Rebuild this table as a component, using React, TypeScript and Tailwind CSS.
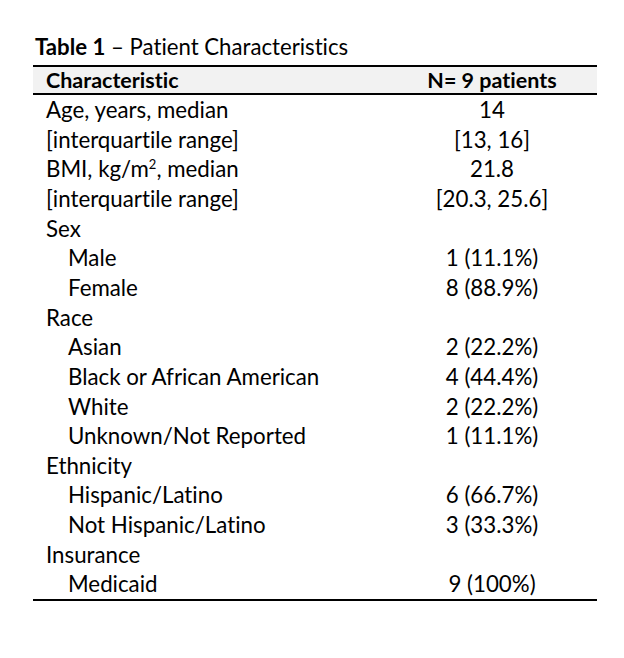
import React from 'react'

type Row = { label: React.ReactNode; value?: string; indent?: boolean }

const rows: Row[] = [
  { label: 'Age, years, median', value: '14' },
  { label: '[interquartile range]', value: '[13, 16]' },
  {
    label: (
      <>
        BMI, kg/m<sup className="text-[13px] relative -top-[8px]">2</sup>, median
      </>
    ),
    value: '21.8',
  },
  { label: '[interquartile range]', value: '[20.3, 25.6]' },
  { label: 'Sex' },
  { label: 'Male', value: '1 (11.1%)', indent: true },
  { label: 'Female', value: '8 (88.9%)', indent: true },
  { label: 'Race' },
  { label: 'Asian', value: '2 (22.2%)', indent: true },
  { label: 'Black or African American', value: '4 (44.4%)', indent: true },
  { label: 'White', value: '2 (22.2%)', indent: true },
  { label: 'Unknown/Not Reported', value: '1 (11.1%)', indent: true },
  { label: 'Ethnicity' },
  { label: 'Hispanic/Latino', value: '6 (66.7%)', indent: true },
  { label: 'Not Hispanic/Latino', value: '3 (33.3%)', indent: true },
  { label: 'Insurance' },
  { label: 'Medicaid', value: '9 (100%)', indent: true },
]

export default function App() {
  return (
    <div
      className="w-[624px] h-[658px] bg-white text-black pt-[34px] pl-[33px] [font-variant-ligatures:none]"
      style={{ fontFamily: 'Lato, "Open Sans", sans-serif' }}
    >
      <div className="w-[564px]">
        {/* Title */}
        <div className="text-[22.2px] leading-[26px] pl-[2px] h-[31px]">
          <span className="font-bold">Table 1</span> – Patient Characteristics
        </div>

        {/* Header */}
        <div className="flex items-center h-[30px] border-t-2 border-b-2 border-black bg-[#f2f2f2] text-[21.5px] font-bold">
          <div className="flex-1 pl-[13px]">Characteristic</div>
          <div className="w-[210px] text-center">N= 9 patients</div>
        </div>

        {/* Rows */}
        <div className="border-b-2 border-black">
          {rows.map((r, i) => (
            <div key={i} className="flex items-center h-[29.65px] text-[22.3px]">
              <div className={r.indent ? 'flex-1 pl-[35px]' : 'flex-1 pl-[13px]'}>{r.label}</div>
              <div className="w-[210px] text-center">{r.value}</div>
            </div>
          ))}
        </div>
      </div>
    </div>
  )
}
